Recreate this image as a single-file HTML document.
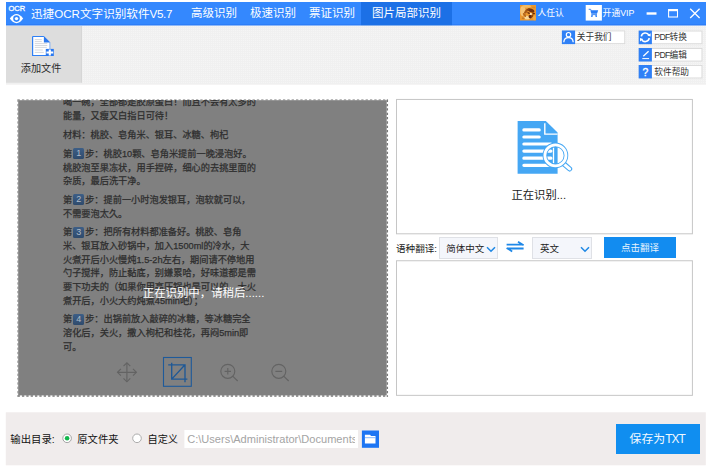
<!DOCTYPE html>
<html lang="zh-CN">
<head>
<meta charset="utf-8">
<title>迅捷OCR文字识别软件V5.7</title>
<style>
*{box-sizing:border-box;margin:0;padding:0}
html,body{width:708px;height:468px;overflow:hidden;background:#fff}
body{position:relative;font-family:"Liberation Sans","Noto Sans CJK SC",sans-serif;color:#222;font-size:10px}
.abs{position:absolute}
.t{position:absolute;white-space:nowrap;line-height:1}
/* title bar */
#hdr{left:6px;top:2px;width:700px;height:24px;background:linear-gradient(#3488fe 0,#3488fe 22px,#2d7ef8 22px,#2d7ef8 23px);border-bottom:1px solid #8fb8f6}
#hdr .t{color:#fff}
#tabact{left:361px;top:2px;width:91px;height:24px;background:#1c70e6;border-bottom:1px solid #86b0ec}
/* toolbar */
#tb{left:6px;top:26px;width:700px;height:59px;background:#f0f0f0 conic-gradient(#f5f5f5 25%,#f0f0f0 0) 0 0/2px 2px;border-bottom:1px solid #f5f4f4}
#addbtn{left:6px;top:26px;width:75.500px;height:57px;background:#dddddd;border-bottom:1px solid #e2e2e2;border-right:1px solid #d6d6d6}
.sbtn{position:absolute;height:14px;background:#fff;border:1px solid #dcdcdc;border-left:none}
.sbtn i{position:absolute;left:0;top:-1px;width:13px;height:14px;background:#2f80f5;display:block}
.sbtn span{position:absolute;left:15px;top:1px;font-size:9px;line-height:11px;color:#333;white-space:nowrap}
/* left panel */
#lp{left:18px;top:100px;width:369px;height:296px;overflow:hidden}
#doc{position:absolute;left:45px;top:0.600px;width:200px;font-size:9.200px;line-height:12px;color:#2e2e2e;white-space:nowrap}
#doc .ln{position:absolute;left:0;height:12px;line-height:12px;white-space:nowrap;-webkit-text-stroke:0.250px #2e2e2e}
#doc b{display:inline-block;width:11px;height:11px;background:linear-gradient(#3d5e86,#2f4b6d);color:#b2bcc8;font-weight:normal;font-size:9px;line-height:11px;text-align:center;border-radius:1.500px;vertical-align:-1.600px;margin:-2px 1px -2px 1px;position:relative;top:-2.300px;-webkit-text-stroke:0 transparent}
/* right */
.box{position:absolute;background:#fff;border:1px solid #c9c9c9}
.sel{position:absolute;top:237px;height:22px;background:#f4f6fb;border:1px solid #dfe1e6}
/* footer */
#ft{left:6px;top:412px;width:700px;height:53px;background:#f0eded}
</style>
</head>
<body>
<!-- header -->
<div id="hdr" class="abs"></div>
<div id="tabact" class="abs"></div>
<div id="hdrtxt" class="abs" style="left:0;top:0;color:#fff">
  <svg class="abs" style="left:6px;top:2px" width="24" height="24" viewBox="6 2 24 24">
    <text x="8.400" y="11.350" font-family="Liberation Sans, sans-serif" font-size="7.800" textLength="16.800" lengthAdjust="spacingAndGlyphs" fill="#fff" stroke="#fff" stroke-width="0.300">OCR</text>
    <path d="M9.800 18.600 Q16.500 9.400 23.200 18.600 Q16.500 27.800 9.800 18.600Z" fill="#fff"/>
    <circle cx="16.500" cy="18.600" r="3.300" fill="#3488fe"/>
    <circle cx="16.500" cy="18.600" r="1.700" fill="#fff"/>
  </svg>
  <span class="t" style="left:31px;top:7.700px;font-size:11.600px;color:#fff">迅捷OCR文字识别软件<span style="letter-spacing:-0.3px">V5.7</span></span>
  <span class="t" style="left:191px;top:8.2px;font-size:11.5px;color:#fff">高级识别</span>
  <span class="t" style="left:250px;top:8.2px;font-size:11.5px;color:#fff">极速识别</span>
  <span class="t" style="left:309px;top:8.2px;font-size:11.5px;color:#fff">票证识别</span>
  <span class="t" style="left:372px;top:8.2px;font-size:11.5px;color:#fff">图片局部识别</span>
  <!-- avatar -->
  <svg class="abs" style="left:520px;top:5px" width="16" height="16" viewBox="0 0 16 16">
    <defs><filter id="bl" x="-20%" y="-20%" width="140%" height="140%"><feGaussianBlur stdDeviation="0.55"/></filter><clipPath id="avc"><rect width="16" height="15.600"/></clipPath></defs>
    <g clip-path="url(#avc)"><rect x="-1" y="-1" width="18" height="18" fill="#ea9830"/>
    <g filter="url(#bl)">
      <ellipse cx="2.800" cy="6" rx="2.600" ry="5" fill="#f6c474"/>
      <ellipse cx="7" cy="12.600" rx="3.600" ry="1.900" fill="#f9d795"/>
      <ellipse cx="6.500" cy="1.400" rx="4.500" ry="1.300" fill="#f4bb62"/>
      <ellipse cx="11" cy="5.400" rx="3.600" ry="1.700" transform="rotate(24 11 5.400)" fill="#73300a"/>
      <ellipse cx="6" cy="6.500" rx="1.300" ry="2.600" transform="rotate(40 6 6.500)" fill="#a85a16"/>
      <ellipse cx="10.300" cy="11.600" rx="1.700" ry="1.900" fill="#65290a"/>
      <ellipse cx="13.700" cy="8.600" rx="1.300" ry="0.900" fill="#6a2c0a"/>
      <ellipse cx="4.500" cy="10" rx="1.100" ry="2.400" transform="rotate(-35 4.500 10)" fill="#b96a1c"/>
      <ellipse cx="8" cy="4.600" rx="1.600" ry="0.800" transform="rotate(-20 8 4.600)" fill="#8a4210"/>
      <ellipse cx="8.600" cy="8" rx="1.500" ry="0.800" transform="rotate(30 8.600 8)" fill="#7c380c"/>
      <ellipse cx="12.300" cy="10.800" rx="1" ry="1.400" fill="#94490f"/>
      <ellipse cx="3.300" cy="13.300" rx="1.600" ry="1" fill="#c77a24"/>
      <ellipse cx="13.500" cy="2.500" rx="1.600" ry="1" fill="#d98a2a"/>
      <circle cx="10.900" cy="9" r="1" fill="#fff3d0"/>
      <ellipse cx="14.500" cy="13" rx="1.500" ry="2.500" fill="#f0a840"/>
    </g></g>
  </svg>
  <span class="t" style="left:537.400px;top:9px;font-size:8.800px;color:#fff">人任认</span>
  <svg class="abs" style="left:585px;top:5px" width="18" height="16" viewBox="-0.700 0 18 16">
    <rect width="16.200" height="15.600" fill="#fff"/>
    <path d="M3 4.300h1.900l0.800 1.300" fill="none" stroke="#2b7df6" stroke-width="0.900"/>
    <path d="M4.700 5.300H12.500L11.300 8.700H5.600z" fill="#2b7df6"/>
    <path d="M5.600 9.200H11.300V10.100H5.600z" fill="#2b7df6"/>
    <path d="M5.700 10h1.400l-0.300 2.100h-1.400zM9.600 10h1.400l0.300 2.100h-1.400z" fill="#2b7df6"/>
  </svg>
  <span class="t" style="left:602.600px;top:9px;font-size:8.800px;color:#fff">开通VIP</span>
  <!-- window controls -->
  <svg class="abs" style="left:644px;top:6px" width="38" height="16" viewBox="644 6 38 16"><rect x="646.600" y="12.300" width="9.900" height="2.400" fill="#fff"/><rect x="668.600" y="9.600" width="8.900" height="7.400" fill="none" stroke="#fff" stroke-width="1.050"/><rect x="668.100" y="9.100" width="9.900" height="2.100" fill="#fff"/></svg>
  
  <svg class="abs" style="left:689px;top:8px" width="12" height="11" viewBox="0 0 12 11"><path d="M1.2 0.8L10.6 10M10.6 0.8L1.2 10" stroke="#fff" stroke-width="1.3" fill="none"/></svg>
</div>

<!-- toolbar -->
<div id="tb" class="abs"></div>
<div id="addbtn" class="abs"></div>
<svg class="abs" style="left:31px;top:35px" width="24" height="23" viewBox="0 0 24 23">
  <path d="M1.600 1.500h11.300l6 6v13h-17.300z" fill="#fff"/>
  <path d="M1.600 1.500h11.300M1.600 1.500v19h17.300" fill="none" stroke="#2f80f5" stroke-width="1.200"/>
  <path d="M18.900 7.500v13" fill="none" stroke="#8db6f3" stroke-width="1.100"/>
  <path d="M12.900 1l6.500 6.500h-6.500z" fill="#2b78ee"/>
  <path d="M3.800 4.600h7M3.800 6.600h7M3.800 8.600h12.500M3.800 10.500h12.500M3.800 12.400h12M3.800 15h8M3.800 17.400h9" stroke="#c4c9d0" stroke-width="0.700"/>
  <rect x="14.800" y="13.900" width="8" height="7.100" fill="#2878f0"/>
  <path d="M18.800 14.400v6.200M15.400 17.450h6.800" stroke="#fff" stroke-width="2.100"/>
</svg>
<span class="t" style="left:20.800px;top:63.700px;font-size:10.150px;color:#2a2a2a">添加文件</span>

<svg class="abs" style="left:556px;top:26px" width="150" height="58" viewBox="556 26 150 58">
  <rect x="562.35" y="30.95" width="62.40" height="12.70" fill="#fff" stroke="#d9d9d9" stroke-width="0.9"/>
  <rect x="561.90" y="30.50" width="13.2" height="13.60" fill="#2f80f6"/>
  <circle cx="568.500" cy="34.700" r="2.200" fill="none" stroke="#fff" stroke-width="1.200"/><path d="M563.800 42.300c0.300-6.400 9.100-6.400 9.400 0" fill="none" stroke="#fff" stroke-width="1.250"/>
  <text x="576.800" y="40.300" font-family="Liberation Sans, Noto Sans CJK SC, sans-serif" font-size="8.700" fill="#333">关于我们</text>
  <rect x="639.15" y="31.05" width="62.80" height="12.70" fill="#fff" stroke="#d9d9d9" stroke-width="0.9"/>
  <rect x="638.70" y="30.60" width="13.2" height="13.60" fill="#2f80f6"/>
  <path d="M641.300 36.400a4.100 4.100 0 0 1 7.700-1.100M649.300 38.200a4.100 4.100 0 0 1-7.700 1.100" fill="none" stroke="#fff" stroke-width="1.600"/><path d="M647.400 35.500l3.200 1 0-3.300zM643.200 39.100l-3.200-1 0 3.300z" fill="#fff"/>
  <text x="654.300" y="40.400" font-family="Liberation Sans, Noto Sans CJK SC, sans-serif" font-size="8.700" fill="#333"><tspan letter-spacing="-0.700">PDF</tspan>转换</text>
  <rect x="639.15" y="48.45" width="62.80" height="12.60" fill="#fff" stroke="#d9d9d9" stroke-width="0.9"/>
  <rect x="638.70" y="48.00" width="13.2" height="13.50" fill="#2f80f6"/>
  <path d="M643.300 56.300l5.300-5" stroke="#fff" stroke-width="1.300" fill="none"/><path d="M642.300 58.600h6.800" stroke="#fff" stroke-width="1" fill="none"/>
  <text x="654.300" y="57.800" font-family="Liberation Sans, Noto Sans CJK SC, sans-serif" font-size="8.700" fill="#333"><tspan letter-spacing="-0.700">PDF</tspan>编辑</text>
  <rect x="639.15" y="65.45" width="62.80" height="12.50" fill="#fff" stroke="#d9d9d9" stroke-width="0.9"/>
  <rect x="638.70" y="65.00" width="13.2" height="13.40" fill="#2f80f6"/>
  <text x="645.300" y="76.200" text-anchor="middle" font-family="Liberation Sans, sans-serif" font-size="10.400" fill="#fff" stroke="#fff" stroke-width="0.350">?</text>
  <text x="654.300" y="74.800" font-family="Liberation Sans, Noto Sans CJK SC, sans-serif" font-size="8.700" fill="#333">软件帮助</text>
</svg>

<!-- left panel -->
<svg class="abs" style="left:15px;top:97px" width="376" height="303" viewBox="15 97 376 303">
  <rect x="18.200" y="100.200" width="368.500" height="295.200" fill="#808080"/>
  <g fill="none" stroke="#787878" stroke-dasharray="2.300 2.050">
  <path d="M17.600 99.850H387.800" stroke-width="0.800"/><path d="M17.850 99.600V396.600" stroke-width="0.800"/>
  <path d="M387.350 99.600V396.700" stroke-width="1.400"/><path d="M17.600 396.050H388" stroke-width="1.400"/></g>
</svg>
<div id="lp" class="abs">
  <div id="doc">
    <div class="ln" style="top:-4.900px">喝一碗，全部都是胶原蛋白！而且不会有太多的</div>
    <div class="ln" style="top:9.80px">能量，又瘦又白指日可待！</div>
    <div class="ln" style="top:28.55px">材料：桃胶、皂角米、银耳、冰糖、枸杞</div>
    <div class="ln" style="top:47.30px">第<b>1</b>步：桃胶10颗、皂角米提前一晚浸泡好。</div>
    <div class="ln" style="top:60.95px">桃胶泡至果冻状，用手捏碎，细心的去挑里面的</div>
    <div class="ln" style="top:74.60px">杂质，最后洗干净。</div>
    <div class="ln" style="top:93.35px">第<b>2</b>步：提前一小时泡发银耳，泡软就可以，</div>
    <div class="ln" style="top:107.00px">不需要泡太久。</div>
    <div class="ln" style="top:125.75px">第<b>3</b>步：把所有材料都准备好。桃胶、皂角</div>
    <div class="ln" style="top:139.40px">米、银耳放入砂锅中，加入1500ml的冷水，大</div>
    <div class="ln" style="top:153.05px">火煮开后小火慢炖1.5-2h左右，期间请不停地用</div>
    <div class="ln" style="top:166.70px">勺子搅拌，防止黏底，别嫌累哈，好味道都是需</div>
    <div class="ln" style="top:180.35px">要下功夫的（如果你用高压锅也是可以的，大火</div>
    <div class="ln" style="top:194.00px">煮开后，小火大约炖煮45min吧）；</div>
    <div class="ln" style="top:212.75px">第<b>4</b>步：出锅前放入敲碎的冰糖，等冰糖完全</div>
    <div class="ln" style="top:226.40px">溶化后，关火，撒入枸杞和桂花，再闷5min即</div>
    <div class="ln" style="top:240.05px">可。</div>
  </div>
</div>
<span class="t" style="left:142.800px;top:288px;font-size:11.400px;color:#fff">正在识别中，请稍后......</span>
<!-- tool icons -->
<svg class="abs" style="left:110px;top:352px" width="190" height="40" viewBox="110 352 190 40" fill="none" stroke="#636363" stroke-width="1.150">
  <path d="M126.900 363v18.700M117.600 372.300h18.700"/>
  <path d="M123.500 366.200l3.400-3.400 3.400 3.400M123.500 378.400l3.400 3.400 3.400-3.400M120.900 368.900l-3.400 3.400 3.400 3.400M133 368.900l3.400 3.400-3.400 3.400"/>
  <rect x="163.500" y="357.500" width="27.800" height="28.800" stroke="#1e5a9a" stroke-width="1.100"/>
  <path d="M171.700 362.800v16.300h15.700M168.200 364.800h16.800v17.400M172.200 378.600l12.800-13.800" stroke="#1e5896" stroke-width="1.350"/>
  <circle cx="227.800" cy="371.300" r="7"/><path d="M232.900 376.300l4.800 4.700M224.600 371.300h6.400M227.800 368.100v6.400"/>
  <circle cx="278.800" cy="371.300" r="7"/><path d="M283.900 376.300l4.800 4.700M275.400 371.300h6.800"/>
</svg>

<!-- right top box -->
<svg class="abs" style="left:390px;top:95px" width="310" height="306" viewBox="390 95 310 306">
  <rect x="396.500" y="99.450" width="295.900" height="134.350" fill="#fff" stroke="#c6c6c6" stroke-width="1"/>
  <rect x="396.500" y="260.750" width="295.900" height="134.600" fill="#fff" stroke="#c6c6c6" stroke-width="1"/>
</svg>
<svg class="abs" style="left:515px;top:119px" width="60" height="58" viewBox="515 119 60 58">
  <path d="M517.600 121.100h28.200l11.800 11.500v41.100h-40z" fill="#45a7f4"/>
  <path d="M544.800 123.200v10.900h12.800" fill="none" stroke="#fff" stroke-width="1.400"/>
  <path d="M523.900 129.900h15.300M523.900 137h15.300M523.900 144h27M523.900 151.100h27M523.900 158.200h27M523.900 165.300h27" stroke="#fff" stroke-width="3.200" stroke-linecap="round"/>
  <path d="M553.500 147.500v15.800" stroke="#fff" stroke-width="1.300"/>
  <path d="M564.300 164.300l5.300 4.600" stroke="#45a7f4" stroke-width="5.200" stroke-linecap="round"/>
  <path d="M564.300 164.300l5.300 4.600" stroke="#fff" stroke-width="3.100" stroke-linecap="round"/>
  <circle cx="555.400" cy="155.400" r="10.550" fill="none" stroke="#45a7f4" stroke-width="4.600"/>
  <circle cx="555.400" cy="155.400" r="10.550" fill="none" stroke="#fff" stroke-width="2.800"/>
</svg>
<span class="t" style="left:511.500px;top:189.500px;font-size:11.300px;color:#222">正在识别...</span>

<!-- language row -->
<span class="t" style="left:396px;top:243.500px;font-size:9.600px;color:#222">语种翻译:</span>
<div class="sel" style="left:439px;width:59px"><span class="t" style="left:6.200px;top:5.500px;font-size:9.500px;color:#222">简体中文</span>
  <svg class="abs" style="left:46px;top:8px" width="10" height="7" viewBox="0 0 10 7"><path d="M1 1.200l4 4 4-4" stroke="#1e88e5" stroke-width="1.500" fill="none"/></svg></div>
<svg class="abs" style="left:504px;top:238px" width="24" height="18" viewBox="504 238 24 18" fill="none" stroke="#1e88e8" stroke-width="1.800">
  <path d="M506.600 244.700h16.300M523.600 245.300l-5.600-3.500"/><path d="M523.600 248.500h-16.300M506.600 247.900l5.600 3.500"/>
</svg>
<div class="sel" style="left:532px;width:60px"><span class="t" style="left:7px;top:5.500px;font-size:9.500px;color:#222">英文</span>
  <svg class="abs" style="left:47px;top:8px" width="10" height="7" viewBox="0 0 10 7"><path d="M1 1.200l4 4 4-4" stroke="#1e88e5" stroke-width="1.500" fill="none"/></svg></div>
<div class="abs" style="left:604px;top:237px;width:72px;height:21px;background:#128cf0"></div>
<span class="t" style="left:621px;top:243px;font-size:9.5px;color:#e8f3fd">点击翻译</span>

<!-- right bottom box -->


<!-- footer -->
<svg class="abs" style="left:0;top:408px" width="708" height="60" viewBox="0 408 708 60"><rect x="5.800" y="412.300" width="700" height="53" fill="#f0ecec"/></svg>
<span class="t" style="left:10.300px;top:434.700px;font-size:10.400px;color:#111">输出目录:</span>
<svg class="abs" style="left:61px;top:432px" width="12" height="13" viewBox="0 0 12 13"><circle cx="6.100" cy="6.300" r="4.300" fill="#fff" stroke="#9a9a9a" stroke-width="0.900"/><circle cx="6.100" cy="6.300" r="2.300" fill="#12b74c"/></svg>
<span class="t" style="left:77.300px;top:434.700px;font-size:10.300px;color:#111">原文件夹</span>
<svg class="abs" style="left:131px;top:432px" width="12" height="13" viewBox="0 0 12 13"><circle cx="6" cy="6.300" r="4.300" fill="#fff" stroke="#a4a4a4" stroke-width="0.900"/></svg>
<span class="t" style="left:147.500px;top:434.700px;font-size:10.200px;color:#111">自定义</span>
<svg class="abs" style="left:180px;top:426px" width="182" height="26" viewBox="180 426 182 26"><rect x="184.400" y="430" width="173.600" height="18" fill="#fff"/></svg>
<div class="abs" style="left:185px;top:431px;width:173px;height:17px"><div class="abs" style="left:0;top:0;width:170.400px;height:17px;overflow:hidden"><span class="t" style="left:2.200px;top:3px;font-size:11.050px;color:#a4a4a4">C:\Users\Administrator\Documents</span></div></div>
<svg class="abs" style="left:360px;top:428px" width="22" height="22" viewBox="360 428 22 22"><rect x="361.900" y="430.500" width="17.100" height="17.300" fill="#1d75f3"/><path d="M364.900 434.800h5.200l0.900 1.200h4.500v7.400h-10.600z" fill="#fff"/><path d="M364.900 437.700h10.600" stroke="#6aa5f7" stroke-width="0.800"/></svg>
<div class="abs" style="left:616px;top:424px;width:84px;height:30px;background:#108ef0"></div>
<span class="t" style="left:629.500px;top:434.300px;font-size:11.900px;color:#f0f8ff">保存为<span style="letter-spacing:-1px">TXT</span></span>
</body>
</html>
